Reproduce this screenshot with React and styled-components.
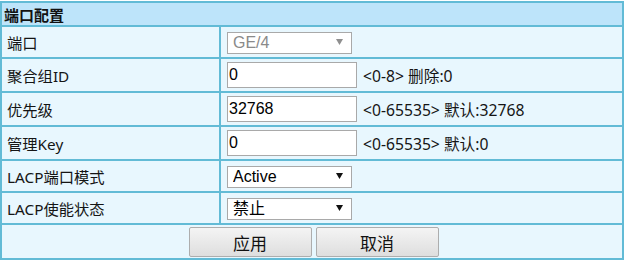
import React from "react";
import styled, { createGlobalStyle } from "styled-components";

const GlobalStyle = createGlobalStyle`
  html, body {
    margin: 0;
    padding: 0;
    background: #ffffff;
  }
  body {
    font-family: "Noto Sans", "Noto Sans CJK SC", sans-serif;
  }
`;

const Page = styled.div`
  padding-top: 1px;
  width: 626px;
`;

const Table = styled.div`
  display: grid;
  grid-template-columns: 217px 401px;
  grid-template-rows: 22px 30px 32px 32px 32px 30px 30px 33px;
  gap: 2px;
  padding: 2px;
  width: 624px;
  box-sizing: border-box;
  background: #62bbd6;
`;

const HeaderCell = styled.div`
  grid-column: 1 / span 2;
  background: #bde4fa;
  display: flex;
  align-items: center;
  padding-left: 2px;
  font-family: "Noto Sans", "Noto Sans CJK SC", sans-serif;
  font-weight: bold;
  font-size: 15px;
  color: #111;
`;

const LabelCell = styled.div`
  background: #e8f7fe;
  display: flex;
  align-items: center;
  padding-left: 5px;
  font-size: 15.3px;
  color: #151515;
`;

const ValueCell = styled.div`
  background: #e8f7fe;
  display: flex;
  align-items: center;
  padding-left: 6px;
  gap: 6px;
`;

const ButtonCell = styled.div`
  grid-column: 1 / span 2;
  background: #e8f7fe;
  display: flex;
  align-items: center;
  justify-content: center;
  gap: 4px;
  padding-top: 1px;
  padding-left: 3px;
`;

const TextInput = styled.input`
  box-sizing: border-box;
  width: 130px;
  height: 26px;
  margin: 0;
  border: 1px solid #a9a9a9;
  padding: 0 0 0 1px;
  background: #ffffff;
  font-family: "Liberation Sans", Arial, sans-serif;
  font-size: 16px;
  color: #000;
  outline: none;
`;

const Hint = styled.span`
  font-size: 15.7px;
  color: #151515;
  white-space: nowrap;
`;

const SelectWrap = styled.div`
  position: relative;
  width: 125px;
  height: 22px;
`;

const Select = styled.select`
  appearance: none;
  -webkit-appearance: none;
  box-sizing: border-box;
  width: 125px;
  height: 22px;
  margin: 0;
  border: 1px solid #a9a9a9;
  border-radius: 0;
  padding: 0 0 0 5px;
  background: #ffffff;
  font-family: "Liberation Sans", Arial, "Noto Sans CJK SC", sans-serif;
  font-size: 16px;
  color: ${(p) => (p.disabled ? "#8a8a8a" : "#000")};
  opacity: 1;
  outline: none;
`;

const Arrow = styled.svg`
  position: absolute;
  right: 9px;
  top: 8px;
  width: 7px;
  height: 6px;
  pointer-events: none;
`;

const Button = styled.button`
  box-sizing: border-box;
  width: 123px;
  height: 30px;
  margin: 0;
  border: 1px solid #adadad;
  border-radius: 2px;
  background: linear-gradient(#f4f4f4, #dedede);
  font-family: "Noto Sans CJK SC", sans-serif;
  font-size: 17px;
  color: #111;
  padding: 0;
`;

function DropDown({ value, options, disabled }) {
  return (
    <SelectWrap>
      <Select disabled={disabled} defaultValue={value}>
        {options.map((o) => (
          <option key={o} value={o}>
            {o}
          </option>
        ))}
      </Select>
      <Arrow viewBox="0 0 7 6">
        <path d="M0 0 L7 0 L3.5 6 Z" fill={disabled ? "#8f8f8f" : "#111"} />
      </Arrow>
    </SelectWrap>
  );
}

export default function App() {
  return (
    <>
      <GlobalStyle />
      <Page>
        <Table>
          <HeaderCell>端口配置</HeaderCell>

          <LabelCell>端口</LabelCell>
          <ValueCell>
            <DropDown value="GE/4" options={["GE/4"]} disabled />
          </ValueCell>

          <LabelCell>聚合组ID</LabelCell>
          <ValueCell>
            <TextInput defaultValue="0" />
            <Hint>&lt;0-8&gt; 删除:0</Hint>
          </ValueCell>

          <LabelCell>优先级</LabelCell>
          <ValueCell>
            <TextInput defaultValue="32768" />
            <Hint>&lt;0-65535&gt; 默认:32768</Hint>
          </ValueCell>

          <LabelCell>管理Key</LabelCell>
          <ValueCell>
            <TextInput defaultValue="0" />
            <Hint>&lt;0-65535&gt; 默认:0</Hint>
          </ValueCell>

          <LabelCell>LACP端口模式</LabelCell>
          <ValueCell>
            <DropDown value="Active" options={["Active", "Passive"]} />
          </ValueCell>

          <LabelCell>LACP使能状态</LabelCell>
          <ValueCell>
            <DropDown value="禁止" options={["禁止", "使能"]} />
          </ValueCell>

          <ButtonCell>
            <Button>应用</Button>
            <Button>取消</Button>
          </ButtonCell>
        </Table>
      </Page>
    </>
  );
}
